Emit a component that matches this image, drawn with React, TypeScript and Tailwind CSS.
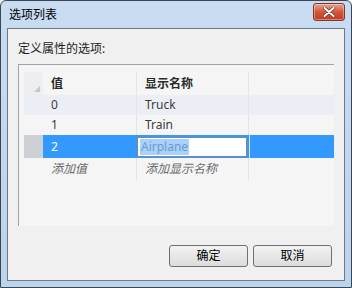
const font = { fontFamily: '"Noto Sans", "Noto Sans CJK SC", sans-serif' };

function CloseButton() {
  return (
    <div className="flex h-[18px] w-[32px] items-center justify-center rounded-[3px] border border-[#7a3a2e] bg-gradient-to-b from-[#e8a392] via-[#d2553b] to-[#c23f22] shadow-[inset_0_0_0_1px_rgba(255,255,255,0.35)]">
      <svg width="12" height="10" viewBox="0 0 12 10">
        <path d="M1.5 1 L10.5 9 M10.5 1 L1.5 9" stroke="#5a2a20" strokeWidth="3.2" strokeLinecap="round" />
        <path d="M1.5 1 L10.5 9 M10.5 1 L1.5 9" stroke="#ffffff" strokeWidth="2" strokeLinecap="round" />
      </svg>
    </div>
  );
}

function RowHead({ shaded }: { shaded?: boolean }) {
  return <div className={`w-[19px] shrink-0 ${shaded ? 'bg-[#cdd1d5]' : ''}`} />;
}

export default function App() {
  return (
    <div className="h-[288px] w-[352px] bg-white" style={font}>
      <div className="flex h-full flex-col rounded-t-[6px] border border-[#3b4553] bg-gradient-to-b from-[#c9dcf1] to-[#bcd3ec] px-[6px] pb-[6px]">
        <div className="flex h-[27px] shrink-0 items-center justify-between pl-[2px]">
          <span className="text-[12px] text-black">选项列表</span>
          <div className="-mt-[5px]">
            <CloseButton />
          </div>
        </div>
        <div className="flex flex-1 flex-col border border-[#6c7886] bg-[#f0f0f0] px-[10px]">
          <div className="mt-[12px] text-[12px] leading-[16px] text-[#1e1e1e]">定义属性的选项:</div>
          <div className="mt-[7px] h-[162px] border-l border-t border-[#a0a4a8] bg-[#f5f5f5] pl-[5px] pt-[7px] text-[12px] text-[#3c3c3c]">
            <div className="flex h-[23px] items-center">
              <div className="relative h-full w-[19px] shrink-0 bg-[#eceef2]">
                <svg className="absolute bottom-[3px] right-[3px]" width="6" height="6" viewBox="0 0 6 6">
                  <path d="M6 0 L6 6 L0 6 Z" fill="#c6c8cc" />
                </svg>
              </div>
              <div className="flex h-full w-[94px] items-center border-r border-[#e4e4e4] pl-[8px] font-bold text-[#2a2a2a]">值</div>
              <div className="flex h-full w-[112px] items-center border-r border-[#e4e4e4] pl-[8px] font-bold text-[#2a2a2a]">显示名称</div>
              <div className="h-full flex-1" />
            </div>
            <div className="flex h-[20px] items-center bg-[#eceef6]">
              <RowHead shaded />
              <div className="w-[94px] border-r border-[#e4e4e4] pl-[8px]">0</div>
              <div className="w-[112px] border-r border-[#e4e4e4] pl-[8px]">Truck</div>
            </div>
            <div className="flex h-[20px] items-center">
              <RowHead />
              <div className="flex h-full w-[94px] items-center border-r border-[#e4e4e4] pl-[8px]">1</div>
              <div className="flex h-full w-[112px] items-center border-r border-[#e4e4e4] pl-[8px]">Train</div>
            </div>
            <div className="flex h-[23px] items-stretch">
              <div className="w-[19px] shrink-0 bg-[#cdd1d5]" />
              <div className="flex flex-1 items-center bg-[#3399ff]">
                <div className="flex h-full w-[94px] items-center pl-[8px] text-white">2</div>
                <div className="flex h-[20px] w-[110px] items-center border border-[#7b8a9b] bg-white pl-[2px]">
                  <span className="bg-[#a8d1fb] px-[1px] leading-[16px] text-[#6e9ad0]">Airplane</span>
                </div>
                <div className="h-full w-[2px]" />
                <div className="h-full w-px bg-[#e4e4e4]" />
              </div>
            </div>
            <div className="flex h-[22px] items-center italic text-[#6a6a6a]">
              <RowHead />
              <div className="flex h-full w-[94px] items-center border-r border-[#e4e4e4] pl-[8px]">添加值</div>
              <div className="flex h-full w-[112px] items-center border-r border-[#e4e4e4] pl-[8px]">添加显示名称</div>
            </div>
          </div>
          <div className="mt-[19px] flex justify-end gap-[5px] pr-[2px]">
            <button className="h-[22px] w-[79px] rounded-[3px] border border-[#707070] bg-gradient-to-b from-[#f2f2f2] to-[#dcdcdc] text-[12px] text-black">确定</button>
            <button className="h-[22px] w-[79px] rounded-[3px] border border-[#707070] bg-gradient-to-b from-[#f2f2f2] to-[#dcdcdc] text-[12px] text-black">取消</button>
          </div>
        </div>
      </div>
    </div>
  );
}
